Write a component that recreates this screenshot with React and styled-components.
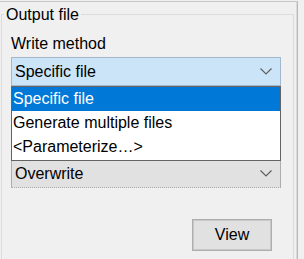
import React from 'react';
import styled, { createGlobalStyle } from 'styled-components';

const GlobalStyle = createGlobalStyle`
  html, body {
    margin: 0;
    padding: 0;
    background: #f0f0f0;
  }
  body {
    font-family: "Liberation Sans", Arial, sans-serif;
    font-size: 16px;
    color: #000000;
  }
`;

const Chevron = () => (
  <svg width="12" height="7" viewBox="0 0 12 7">
    <polyline points="0.5,0.5 6,6 11.5,0.5" fill="none" stroke="#606060" strokeWidth="1.2" />
  </svg>
);

const App = () => {
  return (
    <Page>
      <GlobalStyle />
      <Panel>
        <Group>
          <Legend>Output file</Legend>
          <Body>
            <Field>
              <Label>Write method</Label>
              <ComboWrap>
                <Combo open>
                  <span>Specific file</span>
                  <Chevron />
                </Combo>
                <List>
                  <Item selected>Specific file</Item>
                  <Item>Generate multiple files</Item>
                  <Item>&lt;Parameterize…&gt;</Item>
                </List>
              </ComboWrap>
            </Field>
            <Field spaced>
              <Combo focused>
                <span>Overwrite</span>
                <Chevron />
              </Combo>
            </Field>
            <Actions>
              <Button>View</Button>
            </Actions>
          </Body>
        </Group>
      </Panel>
    </Page>
  );
};

const Page = styled.div`
  padding-top: 1px;
  height: 258px;
  overflow: hidden;
`;
const Panel = styled.div`
  width: 296px;
  height: 257px;
  border-top: 1px solid #c6c6c6;
  border-right: 1px solid #dadada;
  box-shadow: 1px 0 0 #b9b9b9;
`;
const Group = styled.fieldset`
  box-sizing: border-box;
  width: 293px;
  height: 262px;
  margin: 2px 0 0 1px;
  padding: 0 12px 0 2px;
  min-width: 0;
  border: 1px solid #dcdcdc;
`;
const Legend = styled.legend`
  padding: 2px 2px 0;
  line-height: 18px;
  font-size: 16px;
`;
const Body = styled.div`
  padding: 10px 0 0 7px;
`;
const Field = styled.div`
  display: flex;
  flex-direction: column;
  margin-top: ${(p) => (p.spaced ? '73px' : '0')};
`;
const Label = styled.div`
  line-height: 20px;
  margin-bottom: 3px;
`;
const ComboWrap = styled.div`
  position: relative;
`;
const Combo = styled.div`
  box-sizing: border-box;
  display: flex;
  align-items: center;
  justify-content: space-between;
  height: 29px;
  padding: 0 8px 0 3px;
  background: ${(p) => (p.open ? '#cce4f7' : '#e1e1e1')};
  border: 1px solid ${(p) => (p.open ? '#a3b8cc' : '#adadad')};
  border-bottom-style: ${(p) => (p.focused ? 'dotted' : 'solid')};
`;
const List = styled.div`
  position: absolute;
  top: 100%;
  left: 0;
  right: 0;
  z-index: 10;
  padding-bottom: 1px;
  background: #ffffff;
  border: 1px solid #646464;
`;
const Item = styled.div`
  height: 24px;
  line-height: 24px;
  padding-left: 1px;
  white-space: nowrap;
  background: ${(p) => (p.selected ? '#0078d7' : 'transparent')};
  color: ${(p) => (p.selected ? '#ffffff' : '#000000')};
`;
const Actions = styled.div`
  display: flex;
  justify-content: flex-end;
  margin-top: 31px;
  padding-right: 9px;
`;
const Button = styled.button`
  box-sizing: border-box;
  width: 80px;
  height: 32px;
  padding: 0;
  font-family: "Liberation Sans", Arial, sans-serif;
  font-size: 16px;
  color: #000000;
  background: #e1e1e1;
  border: 1px solid #adadad;
  box-shadow: inset 0 0 0 1px #c8c8c8;
`;

export default App;
